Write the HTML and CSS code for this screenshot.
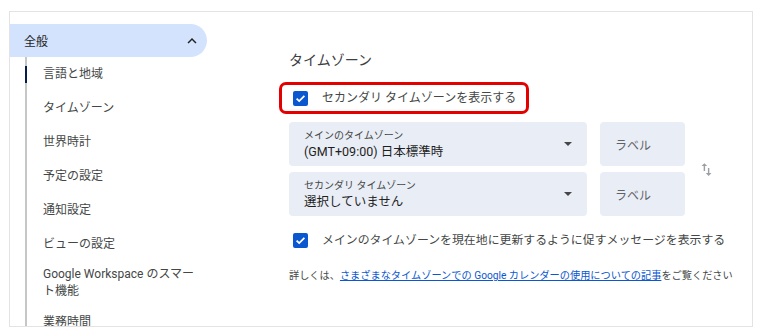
FILE: index.html
```html
<!DOCTYPE html>
<html lang="ja">
<head>
<meta charset="utf-8">
<title>設定</title>
<link rel="stylesheet" href="styles.css">
</head>
<body>
<div class="frame">
  <nav class="nav">
    <div class="pill">
      <span>全般</span>
      <svg class="chev" viewBox="0 0 24 24" width="18" height="18"><path d="M7.41 15.41L12 10.83l4.59 4.58L18 14l-6-6-6 6z" fill="#1f1f1f"/></svg>
    </div>
    <ul class="items">
      <li class="item active">言語と地域</li>
      <li class="item">タイムゾーン</li>
      <li class="item">世界時計</li>
      <li class="item">予定の設定</li>
      <li class="item">通知設定</li>
      <li class="item">ビューの設定</li>
      <li class="item two">Google Workspace のスマー<br>ト機能</li>
      <li class="item">業務時間</li>
    </ul>
  </nav>
  <main class="main">
    <h2 class="title">タイムゾーン</h2>
    <label class="check highlight">
      <svg class="box" viewBox="0 0 15 15" width="15" height="15"><rect width="15" height="15" rx="2" fill="#0b57d0"/><path d="M3.6 7.6l2.6 2.5 5.2-5.2" fill="none" stroke="#fff" stroke-width="1.8"/></svg>
      <span>セカンダリ タイムゾーンを表示する</span>
    </label>
    <div class="zones">
      <div class="select">
        <div class="stext">
          <div class="slabel">メインのタイムゾーン</div>
          <div class="svalue">(GMT+09:00) 日本標準時</div>
        </div>
        <span class="caret"></span>
      </div>
      <div class="labelbox">ラベル</div>
      <div class="swap">
        <svg viewBox="0 0 24 24" width="17" height="17"><path d="M16 17.01V10h-2v7.01h-3L15 21l4-3.99h-3zM9 3L5 6.99h3V14h2V6.99h3L9 3z" fill="#9aa0a6"/></svg>
      </div>
      <div class="select">
        <div class="stext">
          <div class="slabel">セカンダリ タイムゾーン</div>
          <div class="svalue">選択していません</div>
        </div>
        <span class="caret"></span>
      </div>
      <div class="labelbox">ラベル</div>
    </div>
    <label class="check plain">
      <svg class="box" viewBox="0 0 15 15" width="15" height="15"><rect width="15" height="15" rx="2" fill="#0b57d0"/><path d="M3.6 7.6l2.6 2.5 5.2-5.2" fill="none" stroke="#fff" stroke-width="1.8"/></svg>
      <span>メインのタイムゾーンを現在地に更新するように促すメッセージを表示する</span>
    </label>
    <p class="foot">詳しくは、<a href="#">さまざまなタイムゾーンでの Google カレンダーの使用についての記事</a>をご覧ください</p>
  </main>
</div>
</body>
</html>
```
FILE: styles.css
```css
* { box-sizing: border-box; }
body {
  margin: 0;
  background: #fff;
  font-family: Roboto, "Noto Sans CJK JP", sans-serif;
  color: #444746;
}
.frame {
  margin: 11px 0 0 9px;
  width: 744px;
  height: 316px;
  border: 1px solid #e3e3e3;
  display: flex;
  overflow: hidden;
}
.nav {
  width: 197px;
  flex: none;
  padding-top: 12px;
}
.pill {
  height: 33px;
  background: #d3e3fd;
  border-radius: 0 17px 17px 0;
  display: flex;
  align-items: center;
  justify-content: space-between;
  padding: 0 6px 0 14px;
  font-size: 12px;
  color: #1f1f1f;
}
.chev { display: block; }
.items {
  list-style: none;
  margin: 0 0 0 15px;
  padding: 0;
  border-left: 2px solid #c4c7c5;
}
.item {
  position: relative;
  padding: 8px 0 8px 16px;
  font-size: 12px;
  line-height: 18px;
  color: #444746;
  white-space: nowrap;
}
.item.two {
  padding: 5px 0 5px 16px;
  line-height: 17px;
}
.item.active::before {
  content: "";
  position: absolute;
  left: -2px;
  top: 9px;
  bottom: 8px;
  width: 2px;
  background: #041e49;
}
.main {
  flex: 1;
  padding: 38px 0 0 82px;
  display: flex;
  flex-direction: column;
  align-items: flex-start;
}
.title {
  margin: 0;
  font-size: 14px;
  line-height: 20px;
  font-weight: 400;
  color: #3c4043;
}
.check {
  display: flex;
  align-items: center;
  gap: 14px;
  font-size: 12px;
  line-height: 18px;
  color: #444746;
}
.box { display: block; flex: none; }
.highlight {
  margin: 12px 0 0 -10px;
  height: 32px;
  border: 3px solid #e50000;
  border-radius: 7px;
  padding: 0 10px 0 11px;
}
.zones {
  margin-top: 8px;
  display: grid;
  grid-template-columns: 298px 85px auto;
  grid-template-rows: 44px 44px;
  column-gap: 13px;
  row-gap: 6px;
}
.select {
  background: #e9edf5;
  border-radius: 4px;
  display: flex;
  align-items: center;
  justify-content: space-between;
  padding: 0 14px 0 15px;
}
.slabel {
  font-size: 10px;
  line-height: 14px;
  color: #444746;
}
.svalue {
  font-size: 12.5px;
  line-height: 17px;
  color: #1f1f1f;
}
.caret {
  width: 0;
  height: 0;
  border-left: 4px solid transparent;
  border-right: 4px solid transparent;
  border-top: 4px solid #444746;
  margin-right: 1px;
}
.labelbox {
  background: #e9edf5;
  border-radius: 4px;
  display: flex;
  align-items: center;
  padding-left: 15px;
  font-size: 12px;
  color: #5f6368;
}
.swap {
  grid-column: 3;
  grid-row: 1 / span 2;
  display: flex;
  align-items: center;
}
.swap svg { display: block; }
.plain {
  margin-top: 15px;
  padding-left: 4px;
}
.plain span { font-size: 11.9px; }
.foot {
  margin: 19px 0 0;
  font-size: 10.2px;
  line-height: 16px;
  color: #444746;
  white-space: nowrap;
}
.foot a {
  color: #0b57d0;
  text-decoration: underline;
}
```
